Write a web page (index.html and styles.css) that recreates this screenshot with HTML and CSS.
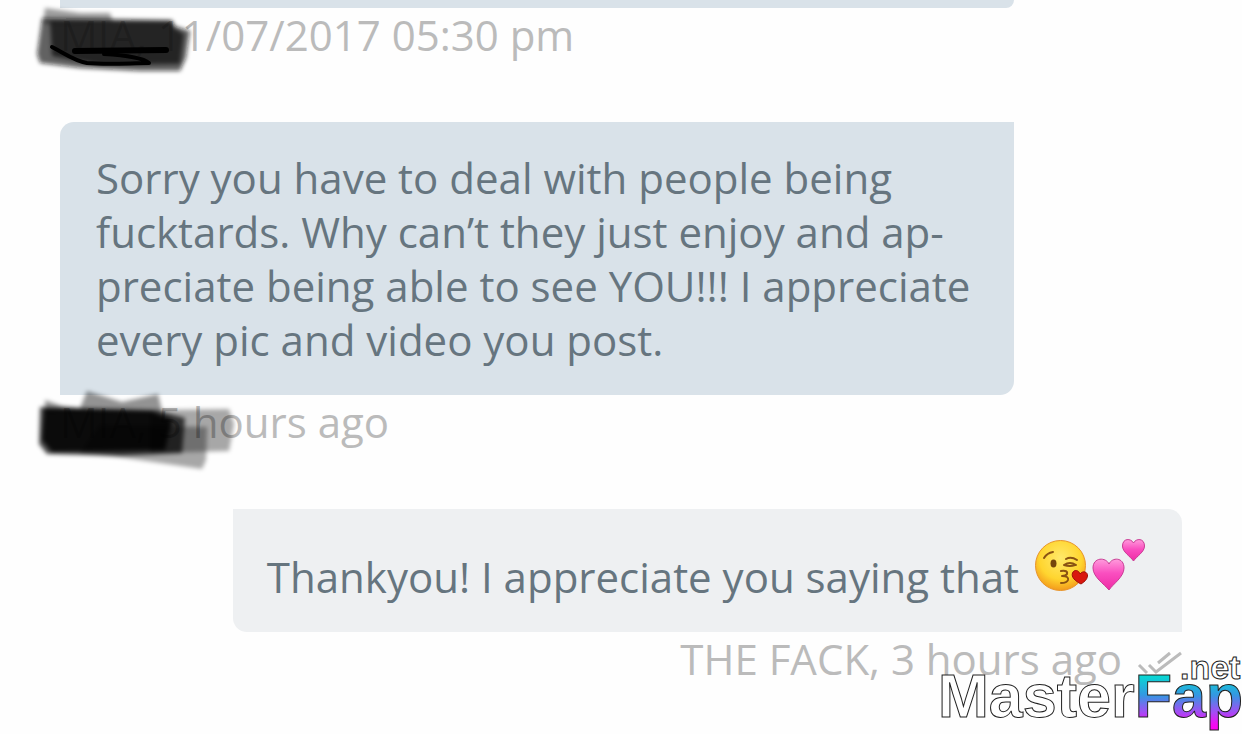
FILE: index.html
```html
<!DOCTYPE html>
<html lang="en">
<head>
<meta charset="utf-8">
<meta name="viewport" content="width=device-width, initial-scale=1">
<title>Messages</title>
<link rel="stylesheet" href="styles.css">
</head>
<body>
<main class="chat">
  <article class="message">
    <div class="bubble bubble-tail"></div>
    <p class="meta">MIA, 11/07/2017 05:30 pm
      <svg class="scribble scribble-first" viewBox="30 0 220 80" width="220" height="80" aria-hidden="true">
        <defs>
          <filter id="soft"><feGaussianBlur stdDeviation="2.200"/></filter>
        </defs>
        <g filter="url(#soft)">
          <path d="M45 8L80 13L110 13L113 22L43 24Z" fill="#000" opacity=".38"/>
          <path d="M42 18L172 20L175 26L190 31L186 58L180 71L140 71L80 68L40 63L37 54Z" fill="#111" opacity=".66"/>
          <path d="M50 21L171 21L174 28L184 34L180 64L100 65L52 56Z" fill="#111" opacity=".72"/>
        </g>
        <path d="M52 47C64 53 74 61 87 63C110 65 130 63 149 63C142 57 122 55 104 54M75 51L166 50" fill="none" stroke="#000" stroke-width="4" stroke-linecap="round" stroke-linejoin="round"/>
        <path d="M75 51L166 50" stroke="#000" stroke-width="6" stroke-linecap="round"/>
      </svg>
    </p>
  </article>

  <article class="message">
    <div class="bubble">Sorry you have to deal with people being fucktards. Why can’t they just enjoy and ap&shy;preciate being able to see YOU!!! I appreciate every pic and video you post.</div>
    <p class="meta">MIA, 5 hours ago
      <svg class="scribble scribble-second" viewBox="30 380 220 100" width="220" height="100" aria-hidden="true">
        <g filter="url(#soft)">
          <path d="M45 400L62 406L80 408L87 391L122 402L158 394L162 411L45 412Z" fill="#000" opacity=".42"/>
          <path d="M150 410L229 409L234 424L229 451L150 453Z" fill="#000" opacity=".34"/>
          <path d="M100 425L207 427L206 460L202 469L118 457L80 453Z" fill="#000" opacity=".34"/>
          <path d="M40 407L155 410L185 418L182 453L120 456L47 454L39 444Z" fill="#000" opacity=".7"/>
          <path d="M44 409L150 411L172 420L165 450L52 452L42 440Z" fill="#000" opacity=".86"/>
        </g>
      </svg>
    </p>
  </article>

  <article class="message message-own">
    <div class="bubble">Thankyou! I appreciate you saying that <span class="emojis"><svg class="emoji" viewBox="1029 537 60 56" width="60" height="56" role="img" aria-label="Face blowing a kiss">
        <defs>
          <radialGradient id="face" cx=".5" cy=".35" r=".65">
            <stop offset="0" stop-color="#ffe96b"/><stop offset=".65" stop-color="#ffd52f"/><stop offset="1" stop-color="#f39b1b"/>
          </radialGradient>
          <linearGradient id="pink" x2="0" y2="1">
            <stop offset="0" stop-color="#ff9bdc"/><stop offset=".45" stop-color="#fa4fc0"/><stop offset="1" stop-color="#ee2ba5"/>
          </linearGradient>
        </defs>
        <circle cx="1059.500" cy="565.500" r="25" fill="url(#face)" stroke="#e8942a"/>
        <ellipse cx="1052.500" cy="563.500" rx="3" ry="4" fill="#74450c"/>
        <path d="M1043 558Q1046 553 1052 552M1065 559Q1070 556 1076 560M1063 565Q1069 561 1075 565M1063 565Q1069 567 1074 565" fill="none" stroke="#8a5312" stroke-width="2" stroke-linecap="round"/>
        <path d="M1060 571Q1067 570 1066 574Q1065 576 1061 576Q1068 576 1067 580Q1066 583 1060 583" fill="none" stroke="#8a5312" stroke-width="2" stroke-linecap="round" stroke-linejoin="round"/>
        <path d="M1080 584C1074 581 1070 577 1071.500 573C1073 569 1078 570 1079 574C1082 570 1087 572 1086.500 576C1086 580 1083 582 1080 584Z" fill="#d9170e" stroke="#9d1009"/>
      </svg><svg class="emoji" viewBox="1089 537 56 56" width="56" height="56" role="img" aria-label="Two hearts">
        <path d="M1108 590C1103 584 1092 577 1092 568C1092 557 1105 557 1108 564C1111 557 1123 557 1123 568C1123 577 1112 584 1108 590Z" fill="url(#pink)" stroke="#c93b94"/>
        <path d="M1132.500 561C1129 556 1121.500 552 1121.500 546C1121.500 538 1130 538 1132.500 543C1135 538 1143.500 538 1143.500 546C1143.500 552 1136 556 1132.500 561Z" fill="url(#pink)" stroke="#c93b94"/>
      </svg></span></div>
    <p class="meta">THE FACK, 3 hours ago
      <svg class="check" viewBox="1137 648 45 26" width="45" height="26" role="img" aria-label="Read">
        <path d="M1139 664L1147 672M1149 664L1156 671L1181 652M1158 662L1170 652" fill="none" stroke="#bbb" stroke-width="3"/>
      </svg>
    </p>
  </article>
</main>

<svg class="watermark" viewBox="0 0 306 84" width="306" height="84" role="img" aria-label="MasterFap.net">
  <defs>
    <linearGradient id="neon" gradientUnits="userSpaceOnUse" x1="0" y1="22" x2="0" y2="80">
      <stop offset="0" stop-color="#00e4d0"/><stop offset=".4" stop-color="#3497e2"/><stop offset=".7" stop-color="#a64bf5"/><stop offset=".9" stop-color="#f20df2"/><stop offset="1" stop-color="#ff00f0"/>
    </linearGradient>
  </defs>
  <text class="brand" x="2" y="67">Master<tspan class="brand-accent">Fap</tspan></text>
  <text class="suffix" x="244" y="29">.net</text>
</svg>
</body>
</html>
```
FILE: styles.css
```css
* {
  box-sizing: border-box;
}

body {
  position: relative;
  margin: 0;
  min-height: 100vh;
  background: #fefefe;
  color: #66757f;
  font-family: "Open Sans", "Noto Sans", sans-serif;
  font-size: 42px;
  line-height: 54px;
  overflow-x: hidden;
}

.chat {
  display: flex;
  flex-direction: column;
  gap: 60px;
  padding: 0 60px;
}

.message {
  display: flex;
  flex-direction: column;
  align-items: flex-start;
}

.message-own {
  align-items: flex-end;
}

.bubble {
  max-width: 85%;
  padding: 29px 36px 28px;
  border-radius: 14px 0 14px 0;
  background: #d9e2e9;
}

.bubble-tail {
  width: 85%;
  height: 8px;
  padding: 0;
  border-radius: 0 0 14px 0;
}

.message-own .bubble {
  padding: 28px 36px 28px 34px;
  border-radius: 0 14px 0 14px;
  background: #eef0f2;
}

.emojis {
  white-space: nowrap;
}

.emoji {
  vertical-align: baseline;
}

.meta {
  position: relative;
  margin: 0;
  color: #bbb;
}

.check {
  margin-left: 4px;
}

.scribble {
  position: absolute;
  left: -30px;
}

.scribble-first {
  top: -8px;
}

.scribble-second {
  top: -15px;
}

.watermark {
  position: absolute;
  right: 0;
  bottom: 0;
}

.brand,
.suffix {
  font-family: "Liberation Sans", Arial, sans-serif;
  font-weight: 700;
  fill: #fff;
  stroke: #222;
  stroke-width: 1px;
}

.brand {
  font-size: 61px;
}

.brand-accent {
  fill: url(#neon);
}

.suffix {
  font-size: 34px;
}
```
